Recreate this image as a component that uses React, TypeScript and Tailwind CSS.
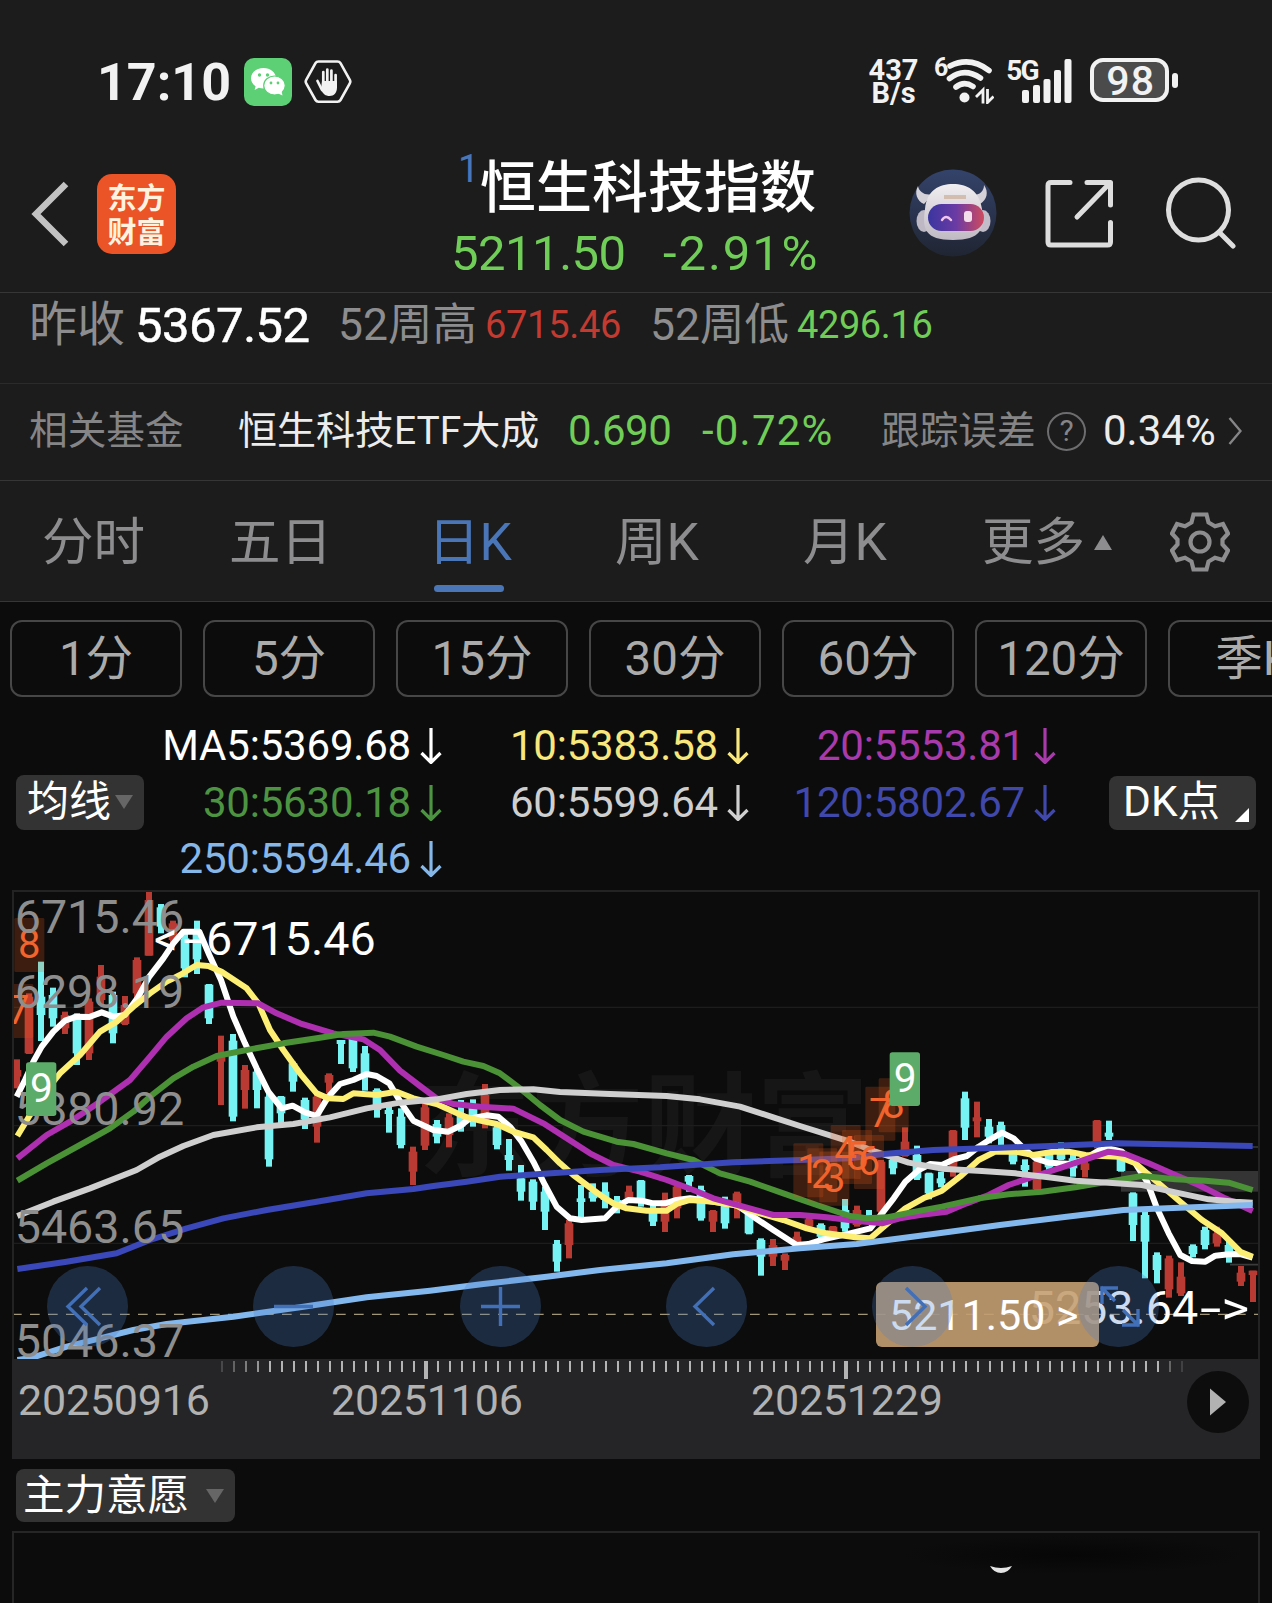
import React from "react";

const UP = "#b93a32";
const DOWN = "#77f3f3";

type Candle = [string, number, number, number, number];

// [direction, high, low, bodyTop, bodyBottom], one entry per trading day
const CANDLES: Candle[] = [
  ["u", 538, 625, 570, 590], ["u", 340, 522, 350, 520], ["d", 245, 483, 350, 405], ["d", 323, 440, 345, 415],
  ["u", 395, 462, 405, 445], ["d", 400, 555, 403, 520], ["u", 355, 540, 365, 520], ["u", 255, 375, 290, 360],
  ["d", 335, 490, 345, 460], ["u", 348, 435, 375, 432], ["u", 232, 370, 240, 340], ["u", 30, 227, 60, 227],
  ["d", 72, 160, 82, 140], ["u", 122, 190, 130, 180], ["d", 160, 292, 175, 265], ["d", 122, 282, 150, 238],
  ["d", 312, 432, 314, 415], ["u", 467, 675, 530, 545], ["d", 462, 724, 482, 710], ["u", 555, 686, 570, 630],
  ["d", 570, 685, 575, 630], ["d", 636, 860, 650, 838], ["d", 648, 738, 650, 700], ["d", 545, 635, 550, 605],
  ["d", 653, 747, 660, 718], ["u", 640, 788, 650, 740], ["u", 580, 640, 585, 608], ["d", 480, 552, 480, 492],
  ["d", 470, 576, 475, 565], ["d", 498, 632, 520, 580], ["d", 625, 713, 630, 690], ["d", 678, 758, 690, 702],
  ["d", 685, 805, 710, 795], ["u", 800, 915, 815, 875], ["u", 672, 810, 682, 797], ["d", 720, 790, 732, 770],
  ["u", 700, 802, 712, 765], ["d", 660, 755, 700, 740], ["d", 658, 740, 680, 715], ["u", 612, 745, 645, 720],
  ["d", 735, 808, 742, 795], ["d", 777, 872, 825, 840], ["d", 855, 962, 895, 935], ["d", 898, 990, 905, 965],
  ["d", 920, 1050, 935, 995], ["d", 1080, 1175, 1092, 1145], ["u", 1020, 1135, 1030, 1095], ["d", 915, 1015, 955, 966],
  ["d", 910, 965, 935, 955], ["d", 907, 985, 935, 960], ["d", 948, 1000, 960, 985], ["u", 917, 965, 935, 955],
  ["d", 900, 980, 902, 965], ["d", 975, 1038, 985, 1025], ["u", 938, 1056, 960, 1025], ["u", 910, 1015, 920, 985],
  ["d", 885, 935, 888, 905], ["d", 917, 1022, 930, 1015], ["u", 990, 1056, 993, 1025], ["d", 950, 1046, 965, 1030],
  ["u", 935, 1015, 940, 975], ["d", 980, 1063, 1000, 1060], ["d", 1075, 1187, 1080, 1130], ["u", 1077, 1158, 1095, 1130],
  ["u", 1120, 1170, 1125, 1142], ["u", 1055, 1100, 1070, 1092], ["u", 1013, 1050, 1018, 1040], ["d", 1030, 1080, 1035, 1070],
  ["u", 1038, 1065, 1040, 1060], ["d", 957, 1055, 990, 1045], ["u", 977, 1040, 990, 1035], ["d", 990, 1030, 1005, 1025],
  ["u", 840, 1005, 845, 995], ["d", 835, 883, 840, 865], ["u", 742, 830, 785, 828], ["d", 797, 900, 825, 895],
  ["d", 878, 958, 880, 940], ["d", 875, 922, 895, 910], ["u", 750, 890, 752, 860], ["d", 635, 780, 655, 743],
  ["u", 665, 772, 712, 724], ["d", 717, 790, 740, 770], ["d", 725, 795, 735, 760], ["d", 815, 853, 820, 845],
  ["d", 838, 920, 855, 870], ["u", 840, 930, 845, 928], ["d", 820, 870, 822, 862], ["d", 787, 840, 815, 838],
  ["d", 825, 890, 835, 865], ["u", 840, 892, 850, 870], ["u", 720, 805, 722, 800], ["d", 722, 780, 758, 770],
  ["d", 830, 875, 835, 873], ["d", 937, 1083, 940, 1035], ["d", 995, 1195, 1005, 1085], ["d", 1117, 1210, 1125, 1170],
  ["u", 1127, 1253, 1135, 1228], ["u", 1147, 1248, 1190, 1240], ["d", 1093, 1132, 1098, 1122], ["d", 1040, 1108, 1050, 1095],
  ["u", 1040, 1100, 1060, 1090], ["d", 1080, 1148, 1095, 1130], ["u", 1158, 1218, 1178, 1205], ["u", 1172, 1266, 1172, 1185],
];

const MA_LINES = [
  {
    color: "#ffffff",
    points:
      "50,650 75,600 100,545 125,500 160,455 195,422 230,410 268,411 305,397 340,410 375,405 412,355 448,290 490,235 520,190 550,155 598,155 628,225 663,300 700,410 735,490 770,565 805,635 845,685 878,677 915,697 950,708 985,650 1020,612 1060,600 1100,582 1130,588 1168,610 1204,670 1240,722 1300,750 1345,755 1380,738 1410,715 1460,706 1495,710 1530,740 1565,785 1600,845 1635,915 1670,980 1710,1015 1745,1020 1815,1015 1850,980 1885,960 1925,962 1960,970 1995,970 2030,960 2070,955 2140,965 2210,975 2260,1010 2320,1050 2390,1095 2425,1092 2470,1078 2550,1060 2611,1045 2646,1000 2681,955 2716,905 2756,870 2791,852 2826,855 2861,838 2901,828 2936,800 2971,778 3006,758 3041,775 3071,805 3106,835 3146,848 3216,852 3256,835 3296,812 3326,805 3366,815 3406,850 3441,905 3471,985 3506,1060 3541,1125 3576,1143 3616,1145 3646,1127 3686,1123 3721,1122 3758,1133",
  },
  {
    color: "#fdee74",
    points:
      "52,768 90,705 140,630 180,580 240,525 300,455 350,425 400,380 450,340 500,305 540,285 590,255 625,258 665,275 740,325 775,370 810,450 850,510 900,580 950,640 985,655 1030,657 1060,640 1130,645 1190,635 1240,655 1310,672 1350,690 1395,710 1440,722 1490,732 1540,755 1600,772 1640,810 1680,850 1720,885 1760,915 1800,945 1840,970 1880,985 1940,992 2000,992 2030,972 2070,960 2140,965 2200,975 2280,1000 2350,1020 2420,1045 2480,1060 2566,1072 2611,1075 2646,1045 2716,985 2770,955 2826,932 2880,890 2936,840 2986,815 3046,815 3100,825 3160,815 3206,815 3256,825 3306,828 3356,830 3406,850 3476,910 3546,970 3606,1020 3666,1060 3721,1115 3758,1130",
  },
  {
    color: "#ae2fb0",
    points:
      "52,835 140,765 210,725 300,665 390,600 450,530 500,470 560,415 610,382 665,368 775,370 830,400 900,430 1000,460 1090,478 1140,510 1200,572 1260,618 1310,655 1360,672 1440,680 1540,686 1630,730 1700,775 1770,820 1840,855 1920,875 2000,900 2080,930 2140,955 2230,980 2320,1005 2400,1005 2480,1012 2566,1022 2646,1030 2700,1015 2760,1005 2840,995 2900,970 2966,945 3026,915 3106,888 3186,862 3266,835 3326,815 3376,822 3446,850 3526,885 3596,915 3676,955 3758,993",
  },
  {
    color: "#4b9136",
    points:
      "52,902 140,850 240,795 330,745 400,695 450,650 520,595 580,560 650,528 750,508 850,490 950,475 1030,462 1120,458 1170,470 1250,500 1330,525 1390,545 1450,558 1500,580 1560,625 1620,675 1680,720 1750,755 1850,785 1900,792 2000,820 2080,840 2160,880 2250,905 2350,940 2450,975 2550,1008 2600,1015 2660,1012 2730,998 2826,980 2936,955 3026,943 3126,935 3226,922 3326,905 3426,888 3526,898 3616,902 3686,908 3758,930",
  },
  {
    color: "#cfcfcf",
    points:
      "52,1008 160,965 270,925 410,870 480,830 550,798 640,765 770,742 880,732 990,712 1100,685 1200,668 1310,658 1400,642 1500,630 1600,628 1680,636 1830,642 2000,648 2100,658 2220,680 2320,712 2400,738 2550,785 2626,815 2726,848 2826,866 2946,873 3046,880 3146,892 3226,902 3326,908 3426,915 3526,937 3626,958 3706,965 3758,968",
  },
  {
    color: "#3a48ba",
    points:
      "52,1167 200,1145 350,1120 450,1080 560,1045 670,1015 800,990 950,965 1100,940 1240,927 1300,918 1400,905 1500,890 1620,882 1800,870 1980,862 2200,847 2400,840 2550,835 2650,822 2800,810 3000,803 3150,798 3350,790 3500,793 3758,798",
  },
  {
    color: "#82b8ee",
    points:
      "52,1440 90,1435 200,1400 300,1375 400,1350 500,1332 700,1310 900,1282 1100,1252 1290,1232 1450,1212 1640,1190 1800,1170 2000,1150 2200,1123 2400,1105 2570,1092 2800,1062 3000,1035 3200,1010 3370,990 3500,985 3758,975",
  },
];

const PRICE_LABELS: [string, number][] = [
  ["6715.46", 160],
  ["6298.19", 383],
  ["5880.92", 735],
  ["5463.65", 1089],
  ["5046.37", 1430],
];

// orange count markers: label, left edge of the box, top edge of the box
const COUNTS: [string, number, number][] = [
  ["8", 43, 114],
  ["7", 10, 312],
  ["1", 2380, 790],
  ["2", 2422, 805],
  ["3", 2458, 815],
  ["4", 2492, 735],
  ["5", 2526, 750],
  ["6", 2562, 765],
  ["7", 2596, 620],
  ["8", 2636, 595],
];

const PERIODS = ["1分", "5分", "15分", "30分", "60分", "120分"];

const DownArrow = () => (
  <svg viewBox="0 0 22 36" className="ml-[9px] h-[36px] w-[22px]" fill="none" stroke="currentColor" strokeWidth="3.200">
    <path d="M11 0V34M1.500 25L11 34.500L20.500 25" />
  </svg>
);

const MaCell = ({ text, className }: { text: string; className: string }) => (
  <div className={`flex items-center justify-end ${className}`}>
    <span className="tracking-[-0.2px]">{text}</span>
    <DownArrow />
  </div>
);

const StatusBar = () => (
  <div className="flex h-[132px] items-start pt-[57px] text-[#f2f2f2]">
    <div className="w-[244px] pl-[97px] pt-[2px] text-[52px] leading-[48px] font-bold">17:10</div>
    <svg viewBox="0 0 48 48" className="mt-px h-12 w-12">
      <rect width="48" height="48" rx="10" fill="#5dd076" />
      <path d="M19.500 10C12.500 10 7 14.500 7 20.300c0 3.300 1.800 6.200 4.600 8l-1 3.600 4.200-2.100c1.500.4 3 .7 4.700.7 6.900 0 12.500-4.600 12.500-10.200S26.400 10 19.500 10z" fill="#fff" />
      <ellipse cx="30.500" cy="27.500" rx="10.800" ry="9.500" fill="#fff" stroke="#5dd076" strokeWidth="1.200" />
      <path d="M33 35l5.500 2.600-1-4.500z" fill="#fff" />
      <g fill="#5dd076">
        <circle cx="15.500" cy="17" r="1.700" /><circle cx="23.500" cy="17" r="1.700" />
        <circle cx="27" cy="25" r="1.400" /><circle cx="34" cy="25" r="1.400" />
      </g>
    </svg>
    <svg viewBox="0 0 48 44" className="ml-3 mt-[3px] h-11 w-12" fill="none">
      <path d="M14.500 1.500h19q2 0 3 1.700l9.300 16.600q1 1.800 0 3.600L36.500 40q-1 1.700-3 1.700h-19q-2 0-3-1.700L2.200 23.400q-1-1.800 0-3.600L11.500 3.200q1-1.700 3-1.700z" stroke="#f2f2f2" strokeWidth="2.600" />
      <g stroke="#f2f2f2" strokeWidth="2.700" strokeLinecap="round">
        <path d="M19.300 12v12M23.300 9.500v14M27.400 10.500v14M31.600 15v12M13.500 21l4.500 9" />
      </g>
      <path d="M18 21h15v6.500c0 5-3 8.500-7.500 8.500-4 0-6.500-2-8.500-6.500z" fill="#f2f2f2" />
    </svg>
    <div className="ml-[514px] mt-px w-[55px] pt-px text-center text-[29px] leading-[23px] font-bold">
      437<br />B/s
    </div>
    <div className="ml-[13px] text-[25px] leading-[22px] font-bold">6</div>
    <svg viewBox="0 0 48 46" className="ml-[-2px] mt-px h-[46px] w-12" fill="none" stroke="#f2f2f2" strokeWidth="5.600">
      <path d="M4 8Q24-2 43 12.500M3.500 20.500Q18 9 34.500 20M10 29Q18 22.500 27 28.500" strokeLinecap="round" />
      <circle cx="18.500" cy="39.500" r="5" fill="#f2f2f2" stroke="none" />
      <path d="M30 39l7-7v13.500M41.500 31v13.500l6-6" strokeWidth="2.800" />
    </svg>
    <div className="ml-[12px] mt-[3px] flex">
      <span className="w-[15px] text-[28px] leading-[22px] font-bold tracking-[-2px]">5G</span>
      <svg viewBox="0 0 52 46" className="mt-[-1px] h-[46px] w-[52px]" fill="#f2f2f2">
        <rect x="1" y="31" width="7" height="13" rx="2" />
        <rect x="12" y="26" width="7" height="18" rx="2" />
        <rect x="22.500" y="20" width="7" height="24" rx="2" />
        <rect x="33" y="11" width="7" height="33" rx="2" />
        <rect x="43.500" y="0" width="7" height="44" rx="2" />
      </svg>
    </div>
    <div className="ml-[17px] mt-px flex h-[44px] w-[79px] items-center justify-center rounded-[13px] border-4 border-[#f2f2f2] bg-[#4b4b4b] text-[41px] leading-none font-medium">
      <span className="pt-[2px] pl-[2px] tracking-[1.200px]">98</span>
    </div>
    <div className="ml-[3px] mt-4 h-[15px] w-[6px] rounded-[3px] bg-[#f2f2f2]" />
  </div>
);

const Avatar = () => (
  <svg viewBox="0 0 88 88" className="h-[88px] w-[88px]">
    <defs>
      <linearGradient id="sky" x1="0" y1="0" x2="0" y2="1">
        <stop offset="0" stopColor="#34436b" /><stop offset="1" stopColor="#202532" />
      </linearGradient>
      <linearGradient id="visor" x1="0" y1="0" x2="1" y2="0">
        <stop offset="0" stopColor="#3a35a0" /><stop offset=".5" stopColor="#6b3ba4" /><stop offset="1" stopColor="#cf4a60" />
      </linearGradient>
      <linearGradient id="shell" x1="0" y1="0" x2="0" y2="1">
        <stop offset="0" stopColor="#f1eef1" /><stop offset="1" stopColor="#bfb9c3" />
      </linearGradient>
    </defs>
    <circle cx="44" cy="44" r="43.500" fill="url(#sky)" />
    <path d="M9 17C5 24 8 32 15 35l9-10c-8 2-14-2-15-8zM75 16c5 7 3 15-4 19l-7-9c7 0 11-4 11-10z" fill="#d4d1d8" />
    <ellipse cx="15" cy="52" rx="7.500" ry="11" fill="#bdb8c4" />
    <ellipse cx="74" cy="52" rx="7.500" ry="11" fill="#c2bdc8" />
    <path d="M16 40C18 21 30 15 44 15s26 6 29 25c3 20-1 31-29 31S13 60 16 40z" fill="url(#shell)" />
    <rect x="19" y="35" width="56" height="27" rx="13.500" fill="url(#visor)" />
    <path d="M33 51q4-6 9 0" stroke="#f1c5ee" strokeWidth="2.400" fill="none" strokeLinecap="round" />
    <rect x="55" y="42" width="8" height="11" rx="3" fill="#f4ddea" />
    <path d="M35 28h22" stroke="#c7a68c" strokeWidth="4" opacity=".6" />
  </svg>
);

const Header = () => (
  <div className="flex h-[160px] items-start">
    <svg viewBox="0 0 40 68" className="ml-[29px] mt-[48px] h-[68px] w-10" fill="none" stroke="#c2c2c2" strokeWidth="6.500">
      <path d="M37 4L7 34L37 64" />
    </svg>
    <div className="ml-[28px] mt-[42px] flex h-20 w-[79px] flex-col items-center justify-center rounded-[15px] bg-[#ea5427] pt-[3px] text-[29px] leading-[34px] font-bold text-[#fff3e0]">
      <span>东方</span>
      <span>财富</span>
    </div>
    <div className="ml-[275px] w-[386px]">
      <div className="flex h-[82px] pl-[7px]">
        <span className="mt-[22px] w-[22px] text-[38px] leading-[30px] text-[#4a76b8]">1</span>
        <span className="mt-[26px] text-[56px] leading-[60px] font-medium text-white">恒生科技指数</span>
      </div>
      <div className="flex pt-[15px] text-[49px] leading-[50px] text-[#70cd57]">
        <span className="w-[212px] tracking-[-0.500px]">5211.50</span>
        <span className="tracking-[1.900px]">-2.91%</span>
      </div>
    </div>
    <div className="ml-[72px] mt-[37px]"><Avatar /></div>
    <svg viewBox="0 0 70 70" className="ml-[47px] mt-[47px] h-[70px] w-[70px]" fill="none" stroke="#dedede" strokeWidth="5" strokeLinecap="round" strokeLinejoin="round">
      <path d="M26 3.500H7Q4 3.500 4 6.500V63Q4 66 7 66H63.500Q66.500 66 66.500 63V43.500M43 3.500H66.500V26M66 4L33 38" />
    </svg>
    <svg viewBox="0 0 72 72" className="ml-[51px] mt-[45px] h-[72px] w-[72px]" fill="none" stroke="#dedede" strokeWidth="5" strokeLinecap="round">
      <circle cx="33.500" cy="33" r="30" />
      <path d="M54 55L68 69" />
    </svg>
  </div>
);

const Stats = () => (
  <div className="flex h-[91px] items-start border-t border-[#363636] text-[#8d8d8f]">
    <div className="flex h-[64px] items-center leading-none">
      <span className="w-[105px] shrink-0 pl-[29px] text-[48px]">昨收</span>
      <span className="w-[203px] shrink-0 pl-[30px] text-[49px] tracking-[-0.500px] text-white [-webkit-text-stroke:0.5px_white]">5367.52</span>
      <span className="w-[147px] shrink-0 pl-[30px] text-[44.500px]">52周高</span>
      <span className="w-[165px] shrink-0 pl-[30px] text-[38px] tracking-[-0.300px] text-[#c23a30]">6715.46</span>
      <span className="w-[147px] shrink-0 pl-[30px] text-[44.500px]">52周低</span>
      <span className="pl-[30px] text-[38px] tracking-[-0.400px] text-[#70cd57]">4296.16</span>
    </div>
  </div>
);

const FundRow = () => (
  <div className="flex h-[97px] items-center border-t border-[#2b2b2b] pb-[2px] pl-[29px] text-[38.700px] leading-none text-[#858587]">
    <span className="w-[209px] shrink-0">相关基金</span>
    <span className="w-[330px] shrink-0 text-[39px] text-[#ececec]">恒生科技ETF大成</span>
    <span className="w-[134px] shrink-0 text-[42px] tracking-[-0.400px] text-[#70cd57]">0.690</span>
    <span className="w-[179px] shrink-0 text-[42px] tracking-[1.200px] text-[#70cd57]">-0.72%</span>
    <span className="w-[166px] shrink-0">跟踪误差</span>
    <span className="flex h-[39px] w-[39px] items-center justify-center rounded-full border-[2.500px] border-[#6d6d6f] text-[30px]">?</span>
    <span className="ml-[17px] w-[125px] shrink-0 text-[42px] text-[#ececec]">0.34%</span>
    <svg viewBox="0 0 14 28" className="h-7 w-[14px] shrink-0" fill="none" stroke="#858587" strokeWidth="2.400">
      <path d="M1.500 1L12.500 14L1.500 27" />
    </svg>
  </div>
);

const Tabs = () => (
  <div className="flex h-[122px] items-center border-y border-[#363636] pl-[42px] pt-[3px] text-[51.500px] leading-none text-[#8d8d8f]">
    <span className="w-[187px]">分时</span>
    <span className="w-[199px]">五日</span>
    <span className="relative w-[187px] text-[#4a76b8]">
      日K
      <i className="absolute top-[68px] left-[6px] h-[7px] w-[70px] rounded-full bg-[#4a76b8]" />
    </span>
    <span className="w-[188px]">周K</span>
    <span className="w-[179px]">月K</span>
    <span className="w-[112px]">更多</span>
    <svg viewBox="0 0 18 15" className="h-[15px] w-[18px]" fill="#8d8d8f"><path d="M9 0L18 15H0z" /></svg>
    <svg viewBox="0 0 60 60" className="ml-[58px] mt-[-2px] h-[60px] w-[60px]" fill="none" stroke="#8d8d8f" strokeWidth="4.200">
      <path d="M23.500 2.500H36.500L38.500 10.500L45 14.300L53 12L58 21.500L52.500 27.500V32.500L58 38.500L53 48L45 45.700L38.500 49.500L36.500 57.500H23.500L21.500 49.500L15 45.700L7 48L2 38.500L7.500 32.500V27.500L2 21.500L7 12L15 14.300L21.500 10.500z" />
      <circle cx="30" cy="30" r="9.500" />
    </svg>
  </div>
);

const Periods = () => (
  <div className="flex h-[112px] gap-[21px] overflow-hidden pl-[10px] pt-[18px] text-[47.500px] leading-none text-[#ababab]">
    {PERIODS.map((p) => (
      <div key={p} className="flex h-[77px] w-[172px] shrink-0 items-center justify-center rounded-xl border-2 border-[#474747] pt-[2px]">
        {p}
      </div>
    ))}
    <div className="flex h-[77px] w-[172px] shrink-0 items-center justify-center rounded-xl border-2 border-[#474747] pt-[2px]">季K</div>
  </div>
);

const MaPanel = () => (
  <div className="flex h-[176px] items-center">
    <div className="ml-4 flex h-[55px] w-[128px] shrink-0 items-center rounded-lg bg-[#333333] pl-[11px] text-[42px] leading-none text-white">
      均线
      <svg viewBox="0 0 18 14" className="ml-[4px] h-[14px] w-[18px]" fill="#666666"><path d="M0 0H18L9 14z" /></svg>
    </div>
    <div className="grid w-[912px] grid-cols-[298px_307px_307px] grid-rows-[57px_57px_56px] self-start pt-[3px] text-[42px] leading-none">
      <MaCell text="MA5:5369.68" className="text-white" />
      <MaCell text="10:5383.58" className="text-[#f7e77c]" />
      <MaCell text="20:5553.81" className="text-[#a93aab]" />
      <MaCell text="30:5630.18" className="text-[#4d9442]" />
      <MaCell text="60:5599.64" className="text-[#cfcfcf]" />
      <MaCell text="120:5802.67" className="text-[#4049ab]" />
      <MaCell text="250:5594.46" className="text-[#86b7e9]" />
    </div>
    <div className="relative ml-[53px] mt-px flex h-[54px] w-[147px] items-center rounded-lg bg-[#333333] pl-[14px] text-[42.500px] leading-none text-white">
      DK点
      <svg viewBox="0 0 14 14" className="absolute right-[7px] bottom-[8px] h-[14px] w-[14px]" fill="#fff"><path d="M14 0V14H0z" /></svg>
    </div>
  </div>
);

const toolIcons = [
  "M40 22L21 40.500L40 59M53 22L34 40.500L53 59",
  "M21 40.500H60",
  "M21 40.500H60M40.500 21V60",
  "M48 22L29 40.500L48 59",
  "M34 22L53 40.500L34 59",
  "M24 38V22H40M23 21L37 35M60 43V59H44M61 60L45 44",
];

const Chart = () => (
  <div className="relative ml-3 h-[469px] w-[1248px] border-2 border-b-0 border-[#232323]">
    <svg viewBox="42 36 3732 1401" className="h-[467px] w-[1244px]">
      <text x="1255" y="860" fontSize="338" fontWeight="700" fill="#161616">东方财富</text>
      <path d="M36 382H3774M36 737H3774M36 1090H3774" stroke="#1d1d1d" strokeWidth="4" />
      <rect x="3363" y="873" width="420" height="62" fill="#fff" opacity=".17" />
      <path d="M3690 1154H3780M3690 801H3780" stroke="#3b3b3b" strokeWidth="5" />
      <path d="M36 1303H3780" stroke="#a29678" strokeWidth="4" strokeDasharray="29 25" />
      {CANDLES.map(([dir, high, low, top, bottom], i) => {
        const x = 51 + i * 36;
        const fill = dir === "u" ? UP : DOWN;
        return (
          <g key={i} fill={fill}>
            <rect x={x - 9} y={high} width="18" height={low - high} />
            <rect x={x - 13} y={top} width="26" height={bottom - top} />
          </g>
        );
      })}
      {MA_LINES.map((l) => (
        <polyline key={l.color} points={l.points} fill="none" stroke={l.color} strokeWidth="18" strokeLinejoin="round" />
      ))}
      {COUNTS.map(([n, x, y], i) => (
        <g key={i}>
          <rect x={x} y={y} width="90" height="162" rx="4" fill="#e8591c" opacity=".22" />
          <text x={x + 11} y={y + 120} fontSize="120" fill="#f2652e">{n}</text>
        </g>
      ))}
      <g fontSize="140" fill="#8e8e8e">
        {PRICE_LABELS.map(([t, y]) => (
          <text key={t} x="44" y={y}>{t}</text>
        ))}
      </g>
      {[[78, 547], [2669, 517]].map(([x, y]) => (
        <g key={x}>
          <rect x={x} y={y} width="91" height="161" rx="8" fill="#5cab69" />
          <text x={x + 12} y={y + 120} fontSize="122" fill="#fff">9</text>
        </g>
      ))}
      <g fontSize="140" fill="#fff">
        <text x="462" y="224">&lt;</text>
        <text x="550" y="224" textLength="64" lengthAdjust="spacingAndGlyphs">-</text>
        <text x="618" y="224">6715.46</text>
        <text x="3086" y="1331">5253.64</text>
        <text x="3600" y="1331" textLength="64" lengthAdjust="spacingAndGlyphs">-</text>
        <text x="3664" y="1331" textLength="84" lengthAdjust="spacingAndGlyphs">&gt;</text>
      </g>
    </svg>
    <div className="absolute top-[390px] left-[862px] flex h-[65px] w-[223px] items-center rounded-md bg-[#c49e71]/90 pl-[13px] pt-px text-[43px] leading-none text-white">
      <span className="w-[167px]">5211.50</span>
      <span>&gt;</span>
    </div>
    <div className="absolute top-[374px] left-[33px] flex gap-[125.300px]">
      {toolIcons.map((d) => (
        <div key={d} className="h-[81px] w-[81px] rounded-full bg-[#4a7cc8]/28">
          <svg viewBox="0 0 81 81" fill="none" stroke="#416fb8" strokeWidth="3.400"><path d={d} /></svg>
        </div>
      ))}
    </div>
  </div>
);

const Axis = () => (
  <div className="ml-3 h-[100px] w-[1248px] bg-[#252527] text-[43px] leading-none tracking-[-0.200px] text-[#b2b2b2]">
    <svg viewBox="0 0 1248 20" className="h-5 w-[1248px]" fill="#b4b4b4">
      {Array.from({ length: 81 }, (_, i) => {
        const major = i === 17 || i === 52;
        const fade = i < 4 ? 0.25 + i * 0.18 : i > 78 ? 0.2 + (80 - i) * 0.25 : 1;
        return (
          <rect key={i} x={209 + i * 12 - (major ? 1 : 0)} y="2" width={major ? 4 : 2} height={major ? 18 : 11} opacity={fade} />
        );
      })}
    </svg>
    <div className="flex items-start">
      <span className="w-[313px] pl-[6px]">20250916</span>
      <span className="w-[420px] pl-[6px]">20251106</span>
      <span className="w-[442px] pl-[6px]">20251229</span>
      <svg viewBox="0 0 62 62" className="mt-[-8px] h-[62px] w-[62px]">
        <circle cx="31" cy="31" r="31" fill="#0d0d0d" />
        <path d="M23 17.500L39 31L23 44.500z" fill="#b2b2b2" />
      </svg>
    </div>
  </div>
);

const SubPanel = () => (
  <>
    <div className="ml-4 mt-[10px] flex h-[53px] w-[219px] items-center rounded-lg bg-[#333333] pl-[7px] pt-px text-[41.500px] leading-none text-white">
      主力意愿
      <svg viewBox="0 0 18 14" className="ml-[17px] h-[14px] w-[18px]" fill="#666666"><path d="M0 0H18L9 14z" /></svg>
    </div>
    <div className="ml-3 mt-[9px] h-[72px] w-[1248px] border-2 border-b-0 border-[#262626]">
      <div className="ml-[890px] mt-[3px] flex h-[38px] w-[340px] items-end bg-[radial-gradient(closest-side,#060606,#0c0c0c)] pl-[85px]">
        <svg viewBox="0 0 24 10" className="h-[10px] w-6">
          <path d="M1 2Q12 6 23 2Q19 9 12 9T1 2z" fill="#e4e4e4" />
        </svg>
      </div>
    </div>
  </>
);

export default function App() {
  return (
    <div className="h-[1603px] w-[1272px] overflow-hidden bg-[#0c0c0c] font-['Roboto','Noto_Sans_CJK_SC',sans-serif] whitespace-nowrap">
      <div className="bg-[#1c1c1c]">
        <StatusBar />
        <Header />
        <Stats />
        <FundRow />
        <Tabs />
      </div>
      <Periods />
      <MaPanel />
      <Chart />
      <Axis />
      <SubPanel />
    </div>
  );
}
